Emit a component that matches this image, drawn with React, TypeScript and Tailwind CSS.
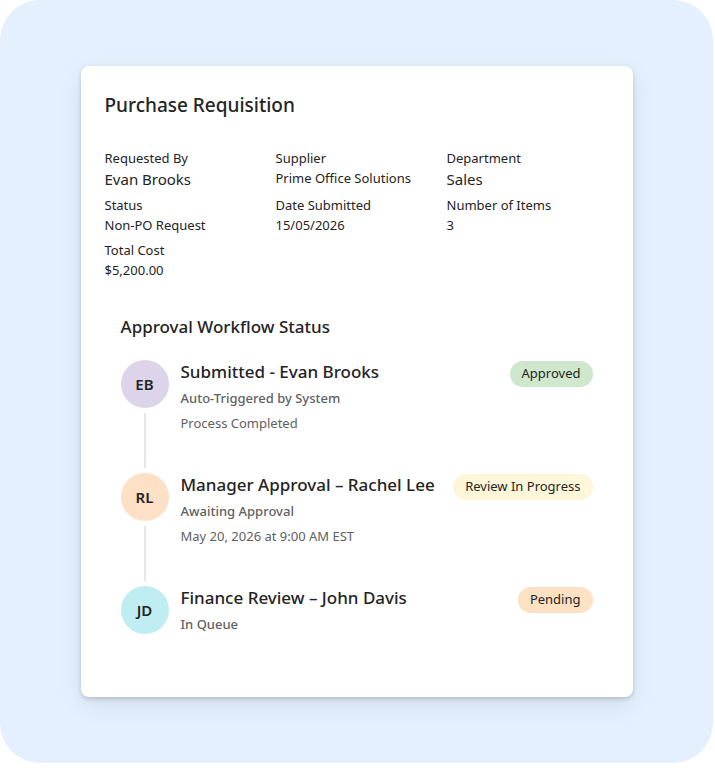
import React from "react"

type Step = {
  initials: string
  avatar: string
  title: string
  subtitle: string
  note?: string
  badge: string
  badgeBg: string
}

const details = [
  { label: "Requested By", value: "Evan Brooks", big: true },
  { label: "Supplier", value: "Prime Office Solutions" },
  { label: "Department", value: "Sales", big: true },
  { label: "Status", value: "Non-PO Request" },
  { label: "Date Submitted", value: "15/05/2026" },
  { label: "Number of Items", value: "3" },
  { label: "Total Cost", value: "$5,200.00" },
]

const steps: Step[] = [
  {
    initials: "EB",
    avatar: "bg-[#ddd4e9]",
    title: "Submitted - Evan Brooks",
    subtitle: "Auto-Triggered by System",
    note: "Process Completed",
    badge: "Approved",
    badgeBg: "bg-[#cfe8cd]",
  },
  {
    initials: "RL",
    avatar: "bg-[#fde0c5]",
    title: "Manager Approval – Rachel Lee",
    subtitle: "Awaiting Approval",
    note: "May 20, 2026 at 9:00 AM EST",
    badge: "Review In Progress",
    badgeBg: "bg-[#fdf6d9]",
  },
  {
    initials: "JD",
    avatar: "bg-[#bfedf1]",
    title: "Finance Review – John Davis",
    subtitle: "In Queue",
    badge: "Pending",
    badgeBg: "bg-[#fde1c3]",
  },
]

function WorkflowStep({ step, last }: { step: Step; last: boolean }) {
  return (
    <div className={last ? "flex" : "flex min-h-[113px]"}>
      <div className="flex flex-col items-center w-12 shrink-0">
        <div
          className={`w-12 h-12 rounded-full flex items-center justify-center text-[15px] font-semibold text-[#242424] ${step.avatar}`}
        >
          {step.initials}
        </div>
        {!last && <div className="w-[2px] flex-1 my-[5px] bg-[#e6e6e6]" />}
      </div>
      <div className="flex-1 ml-3 min-w-0">
        <div className="text-[17px] leading-6 font-medium text-[#242424] whitespace-nowrap">{step.title}</div>
        <div className="mt-[4px] text-[13px] leading-5 font-medium text-[#616161]">{step.subtitle}</div>
        {step.note && <div className="mt-[5px] text-[13px] leading-5 text-[#616161]">{step.note}</div>}
      </div>
      <div className="shrink-0 pl-3">
        <span
          className={`inline-flex items-center h-[26px] mt-px px-3 rounded-full text-[13px] text-[#242424] ${step.badgeBg}`}
        >
          {step.badge}
        </span>
      </div>
    </div>
  )
}

export default function App() {
  return (
    <div className="w-[715px] h-[768px] bg-white" style={{ fontFamily: '"Noto Sans", "Open Sans", sans-serif' }}>
      <div className="w-[713px] h-[763px] rounded-[40px] bg-[#e4f0fd] flex items-center justify-center">
        <div className="w-[552px] bg-white rounded-lg shadow-[0_2px_4px_rgba(0,0,0,0.16),0_8px_24px_rgba(0,0,0,0.08)] px-6 pt-[25px] pb-[63px]">
          <h1 className="text-[19px] leading-7 font-medium text-[#242424]">Purchase Requisition</h1>

          <div className="mt-[29px] grid grid-cols-[171px_171px_1fr] gap-y-[5px]">
            {details.map((d) => (
              <div key={d.label} className="flex flex-col text-[#242424]">
                <span className="text-[13px] leading-5">{d.label}</span>
                <span className={d.big ? "text-[15px] leading-[22px]" : "text-[13px] leading-5"}>{d.value}</span>
              </div>
            ))}
          </div>

          <section className="mt-[35px] px-4">
            <h2 className="text-[17px] leading-6 font-medium text-[#242424]">Approval Workflow Status</h2>
            <div className="mt-[21px]">
              {steps.map((s, i) => (
                <WorkflowStep key={s.initials} step={s} last={i === steps.length - 1} />
              ))}
            </div>
          </section>
        </div>
      </div>
    </div>
  )
}
